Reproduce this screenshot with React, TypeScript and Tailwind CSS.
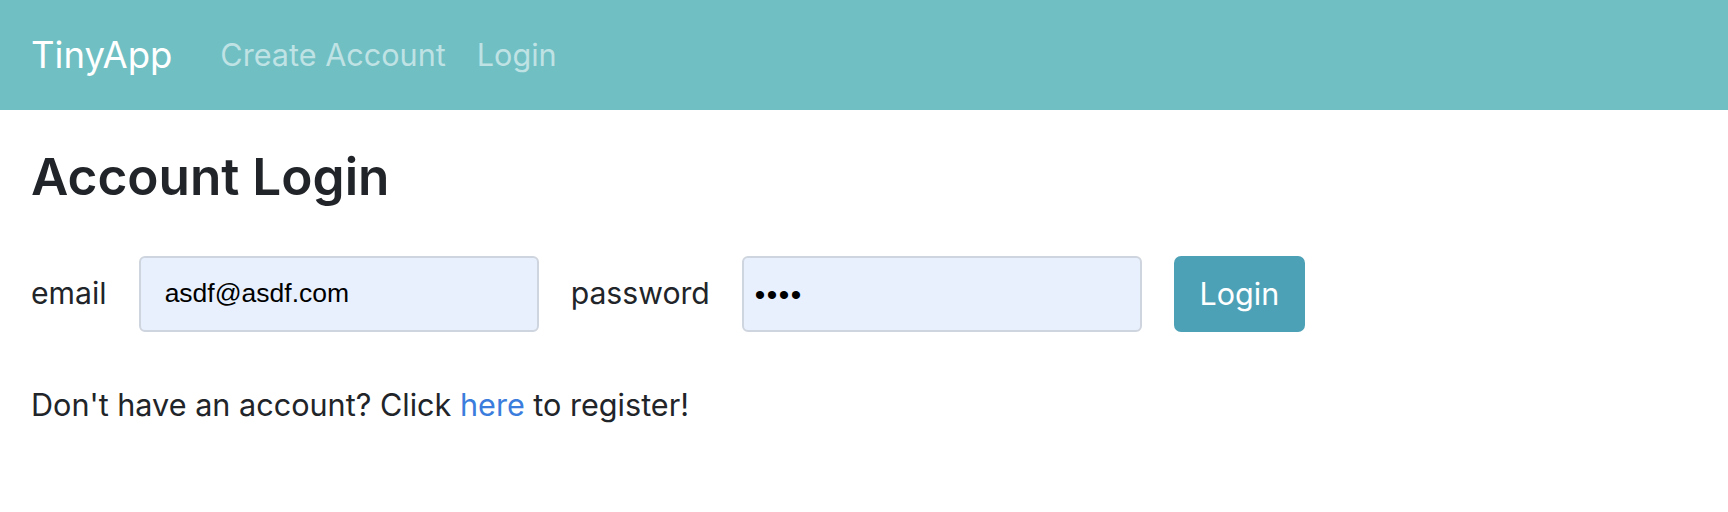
import React from "react";

export default function App() {
  return (
    <div className="min-h-[512px] w-full bg-white font-['Inter',_'Liberation_Sans',_sans-serif] text-[#212529]">
      <nav className="flex h-[110px] items-center gap-[48px] bg-[#70bfc3] px-[31px]">
        <span className="text-[36.5px] leading-none text-white">TinyApp</span>
        <div className="flex items-center gap-[31px] text-[30.6px] leading-none text-[#bfe2e4]">
          <span>Create Account</span>
          <span>Login</span>
        </div>
      </nav>
      <main className="px-[31px]">
        <h1 className="mt-[34px] text-[51.3px] font-semibold leading-[64px]">Account Login</h1>
        <form className="mt-[48px] flex items-center gap-[32px]">
          <label className="text-[30.2px]">email</label>
          <div className="flex h-[76px] w-[400px] items-center rounded-[6px] border-2 border-[#cfd5de] bg-[#e8f0fe] px-[24px] font-['Liberation_Sans',_Arial,_sans-serif] text-[26.5px] text-black">
            asdf@asdf.com
          </div>
          <label className="text-[30.2px]">password</label>
          <div className="flex h-[76px] w-[400px] items-center rounded-[6px] border-2 border-[#cfd5de] bg-[#e8f0fe] px-[11px] font-['Liberation_Sans',_Arial,_sans-serif] text-[30px] tracking-[1.5px] text-black">
            ••••
          </div>
          <button type="button" className="flex h-[76px] w-[131px] items-center justify-center rounded-[7px] bg-[#4da1b6] text-[30.5px] text-white">
            Login
          </button>
        </form>
        <p className="mt-[50px] text-[30.6px]">
          Don't have an account? Click <a className="text-[#3b7ddd]">here</a> to register!
        </p>
      </main>
    </div>
  );
}
